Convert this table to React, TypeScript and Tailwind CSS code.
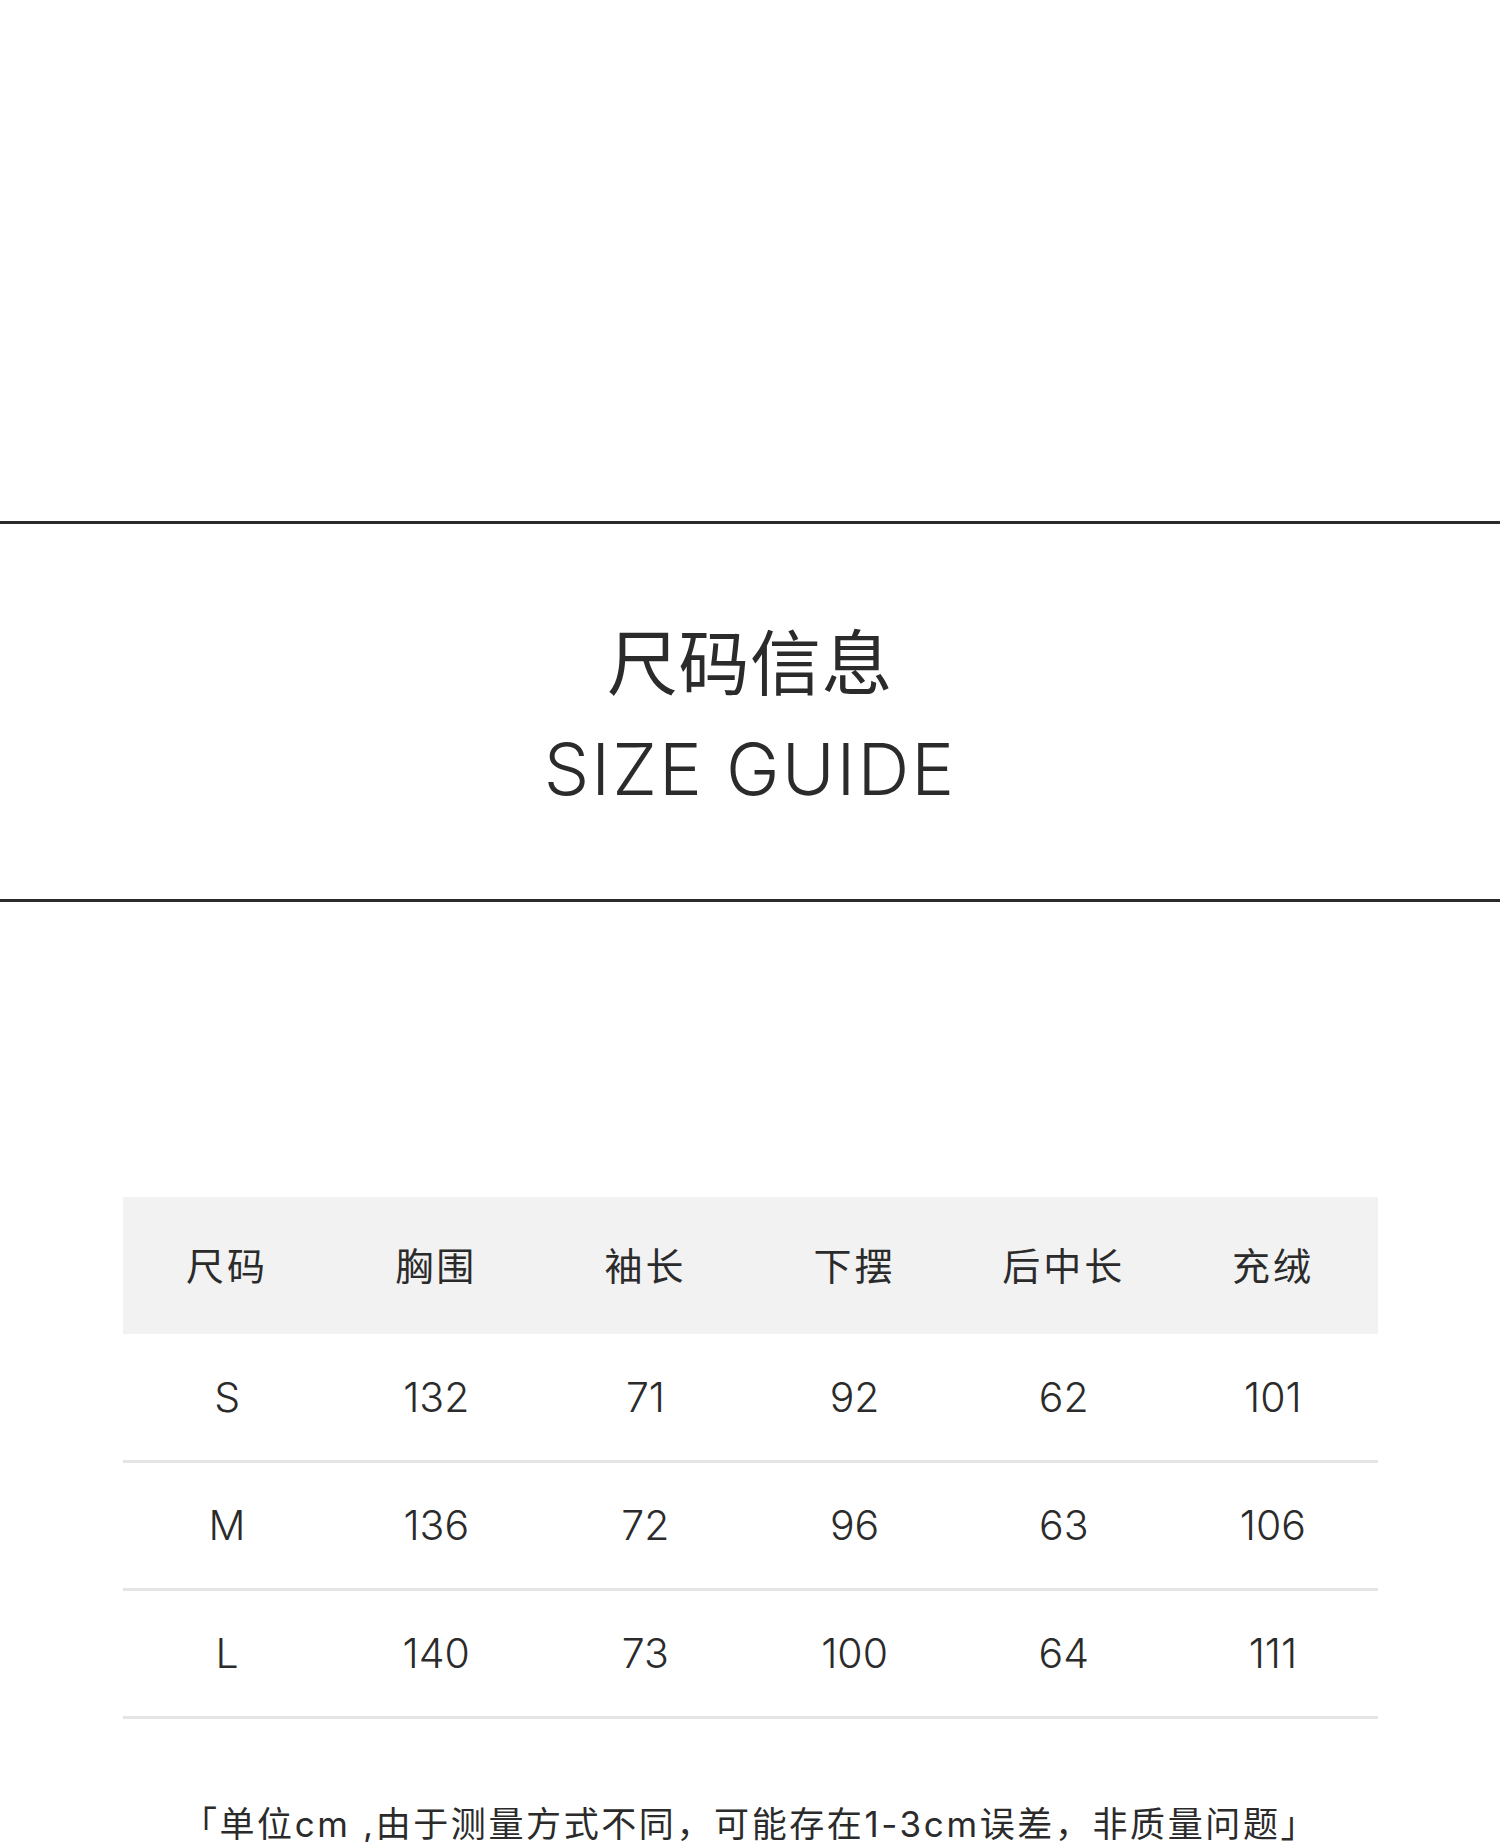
import React from 'react';

const columns = ['尺码', '胸围', '袖长', '下摆', '后中长', '充绒'];

const rows: string[][] = [
  ['S', '132', '71', '92', '62', '101'],
  ['M', '136', '72', '96', '63', '106'],
  ['L', '140', '73', '100', '64', '111'],
];

const font = "font-['Inter','Noto_Sans_CJK_SC',sans-serif]";

export default function App() {
  return (
    <div className={`min-h-[1842px] bg-white text-[#2b2b2b] ${font}`}>
      {/* blank image area */}
      <div className="h-[521px]" />

      {/* Title band */}
      <div className="h-[3px] bg-[#2b2b2b]" />
      <div className="flex flex-col items-center pt-[99px] pb-[94px]">
        <h1 className="h-[72px] text-[71px] leading-none font-normal tracking-[0.5px] font-['Noto_Sans_CJK_SC',sans-serif]">
          尺码信息
        </h1>
        <h2 className="mt-[38px] h-[72px] text-[72px] leading-none font-light tracking-[2px]">
          SIZE GUIDE
        </h2>
      </div>
      <div className="h-[3px] bg-[#2b2b2b]" />

      {/* Size table */}
      <div className="mx-auto mt-[295px] w-[1255px]">
        <div className="grid h-[137px] grid-cols-6 items-center bg-[#f2f2f2]">
          {columns.map((c) => (
            <div
              key={c}
              className="-mt-[3px] text-center text-[38px] leading-none tracking-[3px] font-['Noto_Sans_CJK_SC',sans-serif]"
            >
              {c}
            </div>
          ))}
        </div>
        {rows.map((r, i) => (
          <div
            key={r[0]}
            className={`grid grid-cols-6 items-center border-b-[3px] border-[#e5e5e5] ${
              i === 0 ? 'h-[129px]' : 'h-[128px]'
            }`}
          >
            {r.map((v, j) => (
              <div key={j} className="text-center text-[41px] leading-none font-light">
                {v}
              </div>
            ))}
          </div>
        ))}
      </div>

      {/* Note */}
      <p className="mt-[88px] whitespace-nowrap text-center text-[35px] leading-none tracking-[2.6px]">
        「单位cm ,由于测量方式不同，可能存在1-3cm误差，非质量问题」
      </p>
    </div>
  );
}
